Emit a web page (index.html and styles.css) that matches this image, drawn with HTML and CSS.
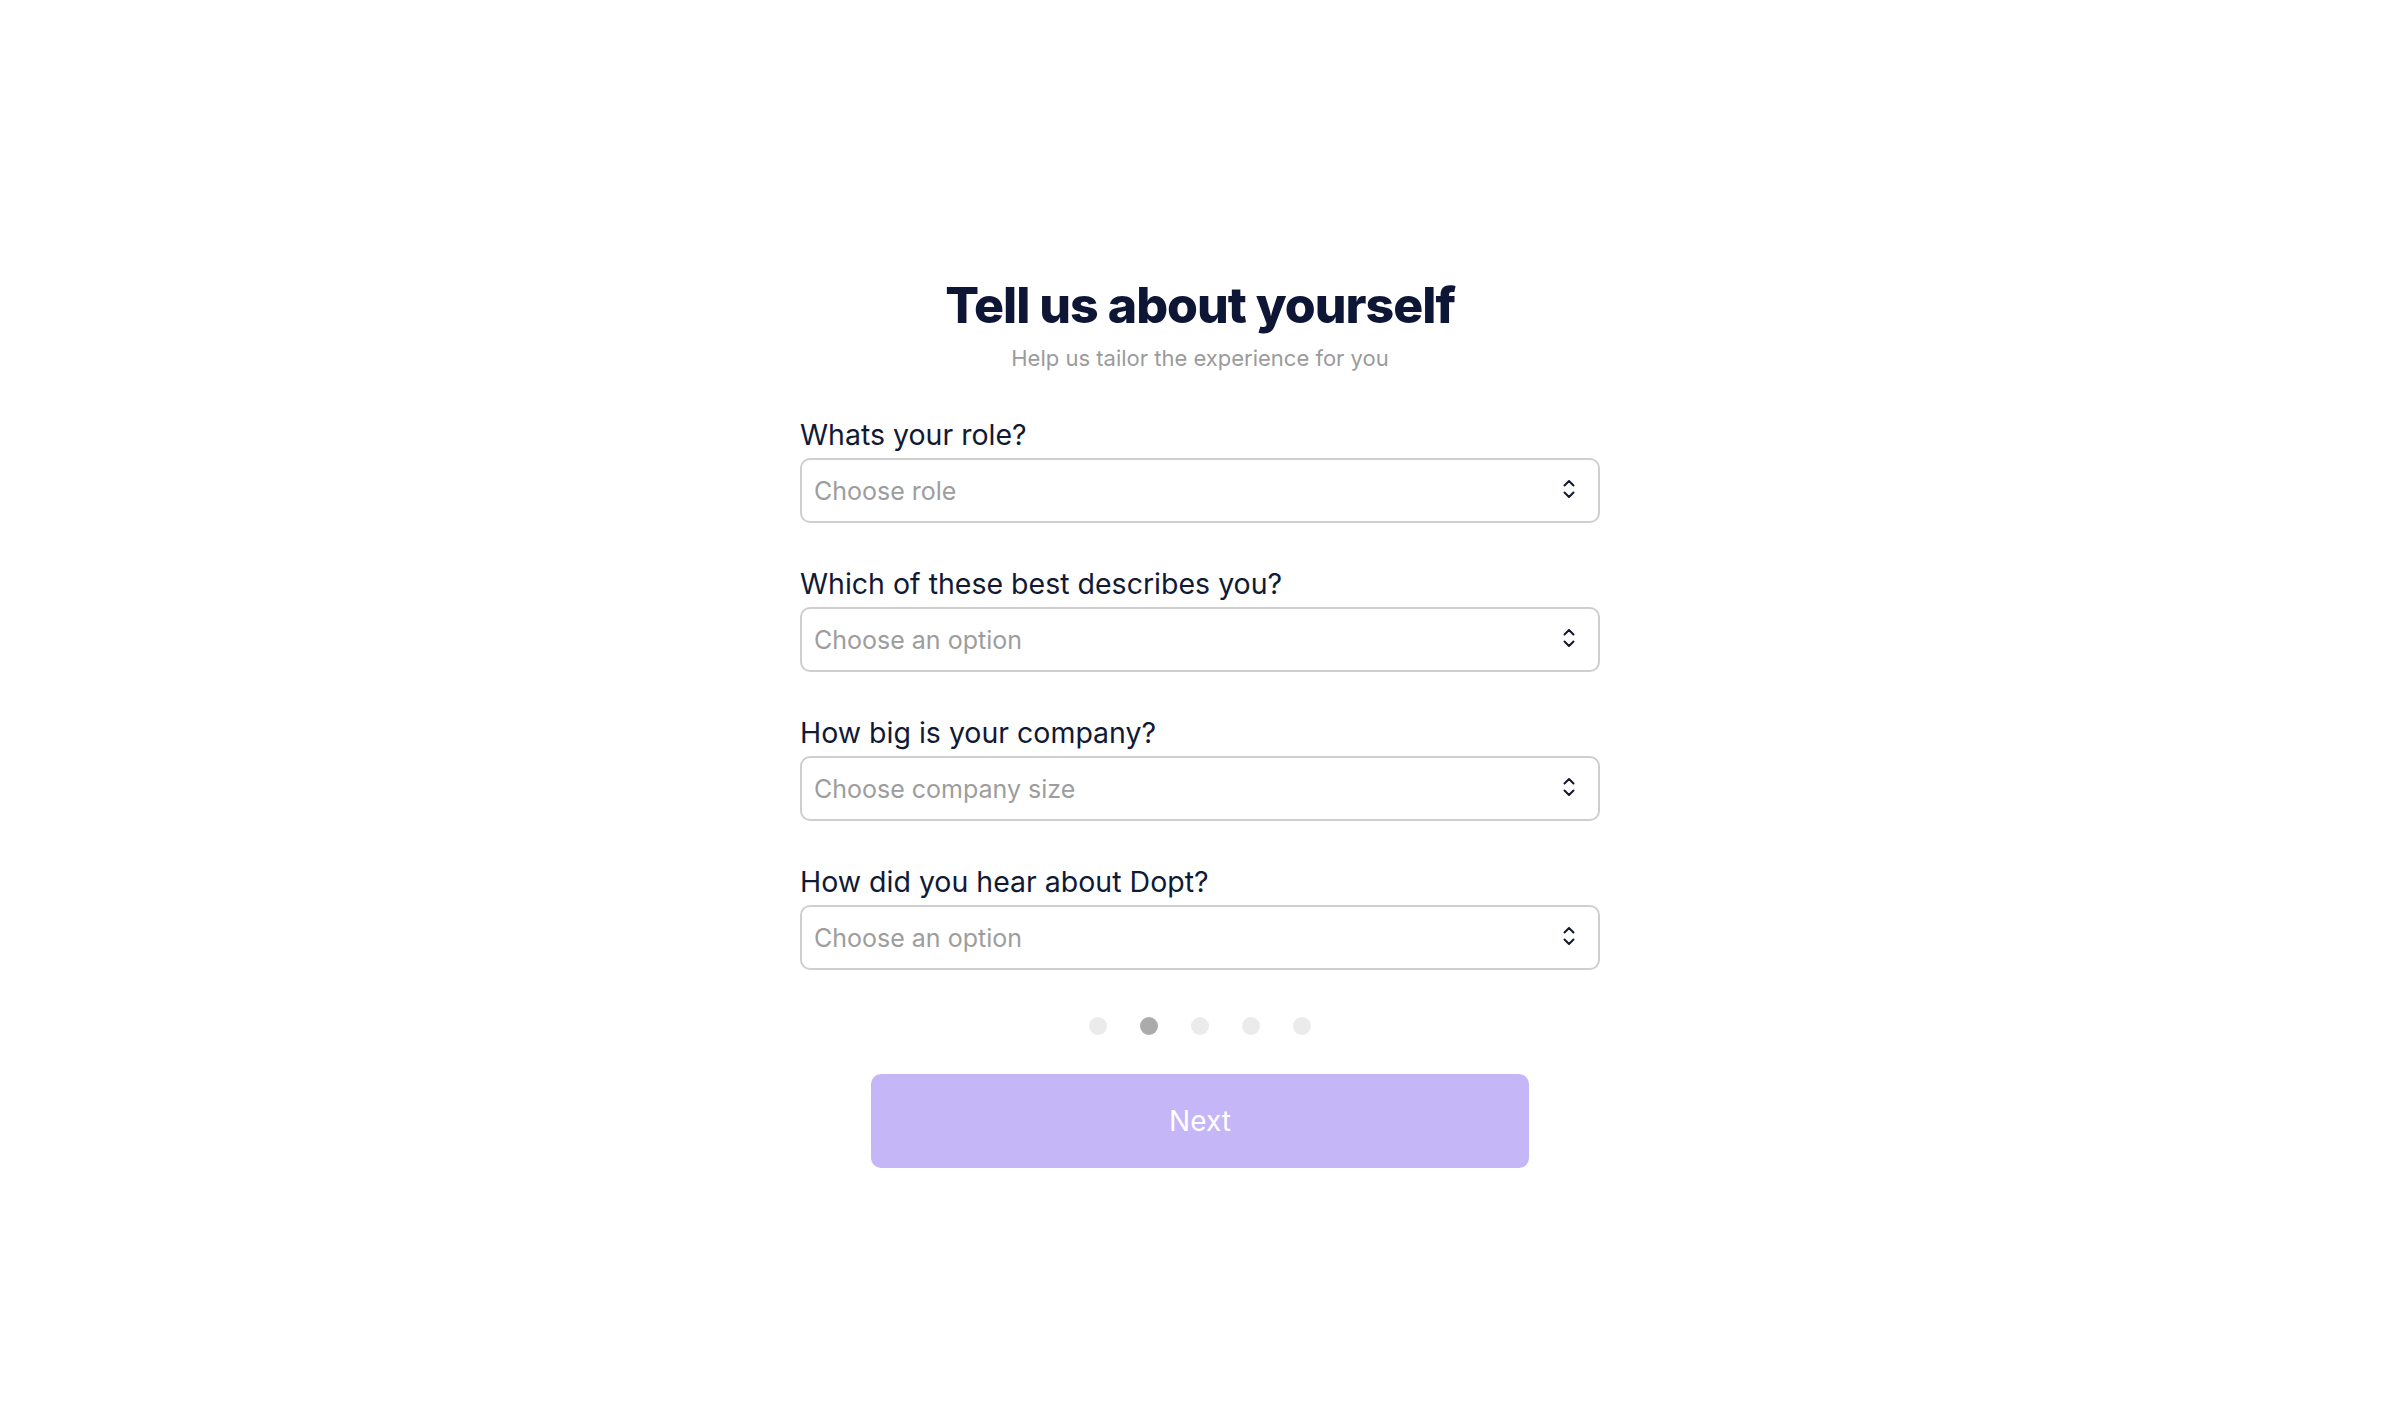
FILE: index.html
```html
<!DOCTYPE html>
<html>

<head>
    <title>Tell us about yourself</title>
    <link rel="stylesheet" href="styles.css">
</head>

<body>
    <div class="container">
        <div class="survey">
            <div class="survey-header">
                <h1>Tell us about yourself</h1>
                <p>Help us tailor the experience for you</p>
            </div>

            <div class="survey-body">
                <div class="form-group">
                    <label for="role">Whats your role?</label>
                    <div class="select">
                        <span class="placeholder">Choose role</span>
                        <svg class="chevrons" width="16" height="24" viewBox="0 0 16 24">
                            <path d="M3.5 8.5 L8 4 L12.5 8.5" />
                            <path d="M3.5 15.5 L8 20 L12.5 15.5" />
                        </svg>
                    </div>
                </div>
                <div class="form-group">
                    <label for="describes">Which of these best describes you?</label>
                    <div class="select">
                        <span class="placeholder">Choose an option</span>
                        <svg class="chevrons" width="16" height="24" viewBox="0 0 16 24">
                            <path d="M3.5 8.5 L8 4 L12.5 8.5" />
                            <path d="M3.5 15.5 L8 20 L12.5 15.5" />
                        </svg>
                    </div>
                </div>
                <div class="form-group">
                    <label for="size">How big is your company?</label>
                    <div class="select">
                        <span class="placeholder">Choose company size</span>
                        <svg class="chevrons" width="16" height="24" viewBox="0 0 16 24">
                            <path d="M3.5 8.5 L8 4 L12.5 8.5" />
                            <path d="M3.5 15.5 L8 20 L12.5 15.5" />
                        </svg>
                    </div>
                </div>
                <div class="form-group">
                    <label for="source">How did you hear about Dopt?</label>
                    <div class="select">
                        <span class="placeholder">Choose an option</span>
                        <svg class="chevrons" width="16" height="24" viewBox="0 0 16 24">
                            <path d="M3.5 8.5 L8 4 L12.5 8.5" />
                            <path d="M3.5 15.5 L8 20 L12.5 15.5" />
                        </svg>
                    </div>
                </div>
            </div>

            <div class="steps">
                <span class="dot"></span>
                <span class="dot active"></span>
                <span class="dot"></span>
                <span class="dot"></span>
                <span class="dot"></span>
            </div>

            <div class="survey-footer">
                <button id="next">Next</button>
            </div>
        </div>
    </div>
</body>

</html>
```

FILE: styles.css
```css
body {
    margin: 0;
    background-color: #fff;
    font-family: Inter, "Noto Sans", sans-serif;
}

.container {
    display: flex;
    justify-content: center;
    padding-top: 276px;
}

.survey {
    width: 800px;
    display: flex;
    flex-direction: column;
    align-items: center;
}

.survey-header {
    text-align: center;
}

.survey-header h1 {
    margin: 0;
    font-size: 50px;
    line-height: 58px;
    font-weight: 800;
    letter-spacing: -1px;
    color: #0d1634;
}

.survey-header p {
    margin: 10px 0 0;
    font-size: 22px;
    line-height: 28px;
    color: #9b9b9b;
}

.survey-body {
    width: 100%;
    margin-top: 48px;
    display: flex;
    flex-direction: column;
    gap: 46px;
}

.form-group label {
    display: block;
    font-size: 28.5px;
    line-height: 30px;
    color: #111a35;
    margin-bottom: 8px;
}

.select {
    height: 65px;
    box-sizing: border-box;
    border: 2px solid #cfcfcf;
    border-radius: 10px;
    padding: 0 21px 0 12px;
    display: flex;
    align-items: center;
    justify-content: space-between;
}

.placeholder {
    font-size: 25px;
    color: #9d9d9d;
}

.chevrons {
    margin-top: -4px;
}

.chevrons path {
    fill: none;
    stroke: #15192b;
    stroke-width: 2;
    stroke-linecap: round;
    stroke-linejoin: round;
}

.steps {
    margin-top: 47px;
    display: flex;
    gap: 33px;
}

.dot {
    width: 18px;
    height: 18px;
    border-radius: 50%;
    background-color: #ebebeb;
}

.dot.active {
    background-color: #ababab;
}

.survey-footer {
    margin-top: 39px;
}

button#next {
    width: 658px;
    height: 94px;
    background-color: #c5b6f8;
    color: #fff;
    border: none;
    border-radius: 10px;
    font-family: Inter, "Noto Sans", sans-serif;
    font-size: 28px;
    cursor: pointer;
}
```
